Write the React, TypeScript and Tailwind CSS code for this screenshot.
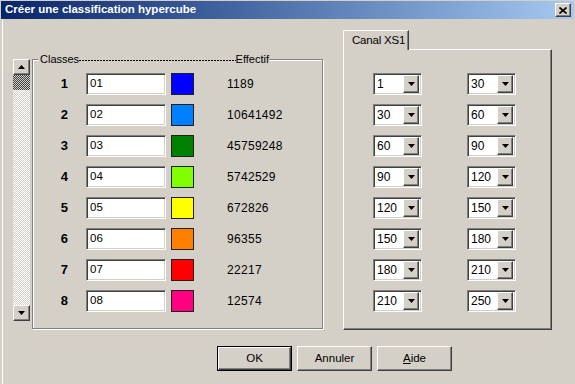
import React from "react";

const rows = [
  { n: 1, code: "01", color: "bg-[#0000ff]", count: "1189", from: "1", to: "30" },
  { n: 2, code: "02", color: "bg-[#0080ff]", count: "10641492", from: "30", to: "60" },
  { n: 3, code: "03", color: "bg-[#008000]", count: "45759248", from: "60", to: "90" },
  { n: 4, code: "04", color: "bg-[#80ff00]", count: "5742529", from: "90", to: "120" },
  { n: 5, code: "05", color: "bg-[#ffff00]", count: "672826", from: "120", to: "150" },
  { n: 6, code: "06", color: "bg-[#ff8000]", count: "96355", from: "150", to: "180" },
  { n: 7, code: "07", color: "bg-[#ff0000]", count: "22217", from: "180", to: "210" },
  { n: 8, code: "08", color: "bg-[#ff0080]", count: "12574", from: "210", to: "250" },
];

const raised =
  "bg-[#d4d0c8] border border-t-white border-l-white border-r-[#404040] border-b-[#404040] shadow-[inset_-1px_-1px_0_#808080]";
const sunken =
  "bg-white border border-t-[#808080] border-l-[#808080] border-r-white border-b-white shadow-[inset_1px_1px_0_#404040,inset_-1px_-1px_0_#d4d0c8]";

const Arrow = ({ up }: { up?: boolean }) => (
  <svg width="7" height="4" viewBox="0 0 7 4">
    <path d={up ? "M3.5 0L7 4H0z" : "M0 0h7L3.5 4z"} fill="#000" />
  </svg>
);

const Combo = ({ value }: { value: string }) => (
  <div className={`${sunken} w-[49px] h-[22px] flex items-center justify-between pl-[3px] pr-[2px]`}>
    <span className="text-[12px] leading-none">{value}</span>
    <div className={`${raised} w-[16px] h-[18px] flex items-center justify-center`}>
      <Arrow />
    </div>
  </div>
);

const Button = ({ children, def }: { children: React.ReactNode; def?: boolean }) => (
  <div className={def ? "border border-black" : ""}>
    <div
      className={`${raised} ${def ? "w-[73px] h-[23px]" : "w-[75px] h-[25px]"} flex items-center justify-center text-[11.5px]`}
    >
      {children}
    </div>
  </div>
);

export default function App() {
  return (
    <div className="w-[575px] h-[384px] bg-[#d4d0c8] overflow-hidden font-['Liberation_Sans',sans-serif] text-black text-[11px]">
      <div className="h-[18px] mt-px mx-px bg-gradient-to-r from-[#0a246a] to-[#a6caf0] flex items-center justify-between pl-[4px] pr-[3px]">
        <span className="text-white font-bold text-[11.5px]">Créer une classification hypercube</span>
        <div className={`${raised} w-[16px] h-[14px] flex items-center justify-center`}>
          <svg width="8" height="7" viewBox="0 0 8 7">
            <path d="M0.5 0.5L7.5 6.5M7.5 0.5L0.5 6.5" stroke="#000" strokeWidth="1.6" />
          </svg>
        </div>
      </div>

      <div className="ml-[2px] border-l border-white h-[365px] pl-[10px]">
        <div className="flex items-start">
          <div className="mt-[40px] flex items-start">
            <div className="w-[17px] h-[262px] flex flex-col">
              <div className={`${raised} h-[16px] flex items-center justify-center`}>
                <Arrow up />
              </div>
              <div className="h-[15px] bg-[repeating-conic-gradient(#404040_0_25%,#d4d0c8_0_50%)] bg-[length:2px_2px]" />
              <div className="flex-1 bg-[repeating-conic-gradient(#ffffff_0_25%,#d4d0c8_0_50%)] bg-[length:2px_2px]" />
              <div className={`${raised} h-[16px] flex items-center justify-center`}>
                <Arrow />
              </div>
            </div>

            <div className="ml-[2px] w-[291px] h-[270px] border border-[#808080] shadow-[1px_1px_0_#fff,inset_1px_1px_0_#fff]">
              <div className="-mt-[7px] ml-[5px] w-[231px] h-[13px] flex items-center bg-[#d4d0c8] pl-[2px]">
                <span>Classes</span>
                <div className="flex-1 h-px mt-[2px] bg-[repeating-linear-gradient(90deg,#000_0_2px,transparent_2px_3px)]" />
                <span>Effectif</span>
              </div>
              <div className="mt-[7px] flex flex-col gap-[9px]">
                {rows.map((r) => (
                  <div key={r.n} className="flex items-center h-[22px]">
                    <span className="w-[35px] text-right font-bold text-[13px]">{r.n}</span>
                    <div className={`${sunken} ml-[18px] w-[80px] h-[22px] flex items-center pl-[3px] text-[11.5px]`}>
                      {r.code}
                    </div>
                    <div className={`${r.color} ml-[5px] w-[23px] h-[22px] border border-[#202020]`} />
                    <span className="ml-[33px] text-[12px] tracking-[0.3px]">{r.count}</span>
                  </div>
                ))}
              </div>
            </div>
          </div>

          <div className="ml-[20px] mt-[11px] flex flex-col">
            <div className="relative z-[1] -mb-px w-[66px] h-[20px] bg-[#d4d0c8] border-t border-l border-white border-r border-r-[#404040] shadow-[inset_-1px_0_0_#808080] rounded-tl-[2px] flex items-center pl-[8px] text-[11.5px] tracking-[-0.2px]">
              Canal XS1
            </div>
            <div className="w-[209px] h-[281px] border border-t-white border-l-white border-r-[#404040] border-b-[#404040] shadow-[inset_-1px_-1px_0_#808080] pt-[23px] pl-[29px]">
              <div className="flex flex-col gap-[9px]">
                {rows.map((r) => (
                  <div key={r.n} className="flex gap-[45px]">
                    <Combo value={r.from} />
                    <Combo value={r.to} />
                  </div>
                ))}
              </div>
            </div>
          </div>
        </div>

        <div className="mt-[16px] pl-[204px] flex gap-[5px]">
          <Button def>OK</Button>
          <Button>Annuler</Button>
          <Button>
            <span>
              <span className="underline">A</span>ide
            </span>
          </Button>
        </div>
      </div>
    </div>
  );
}
